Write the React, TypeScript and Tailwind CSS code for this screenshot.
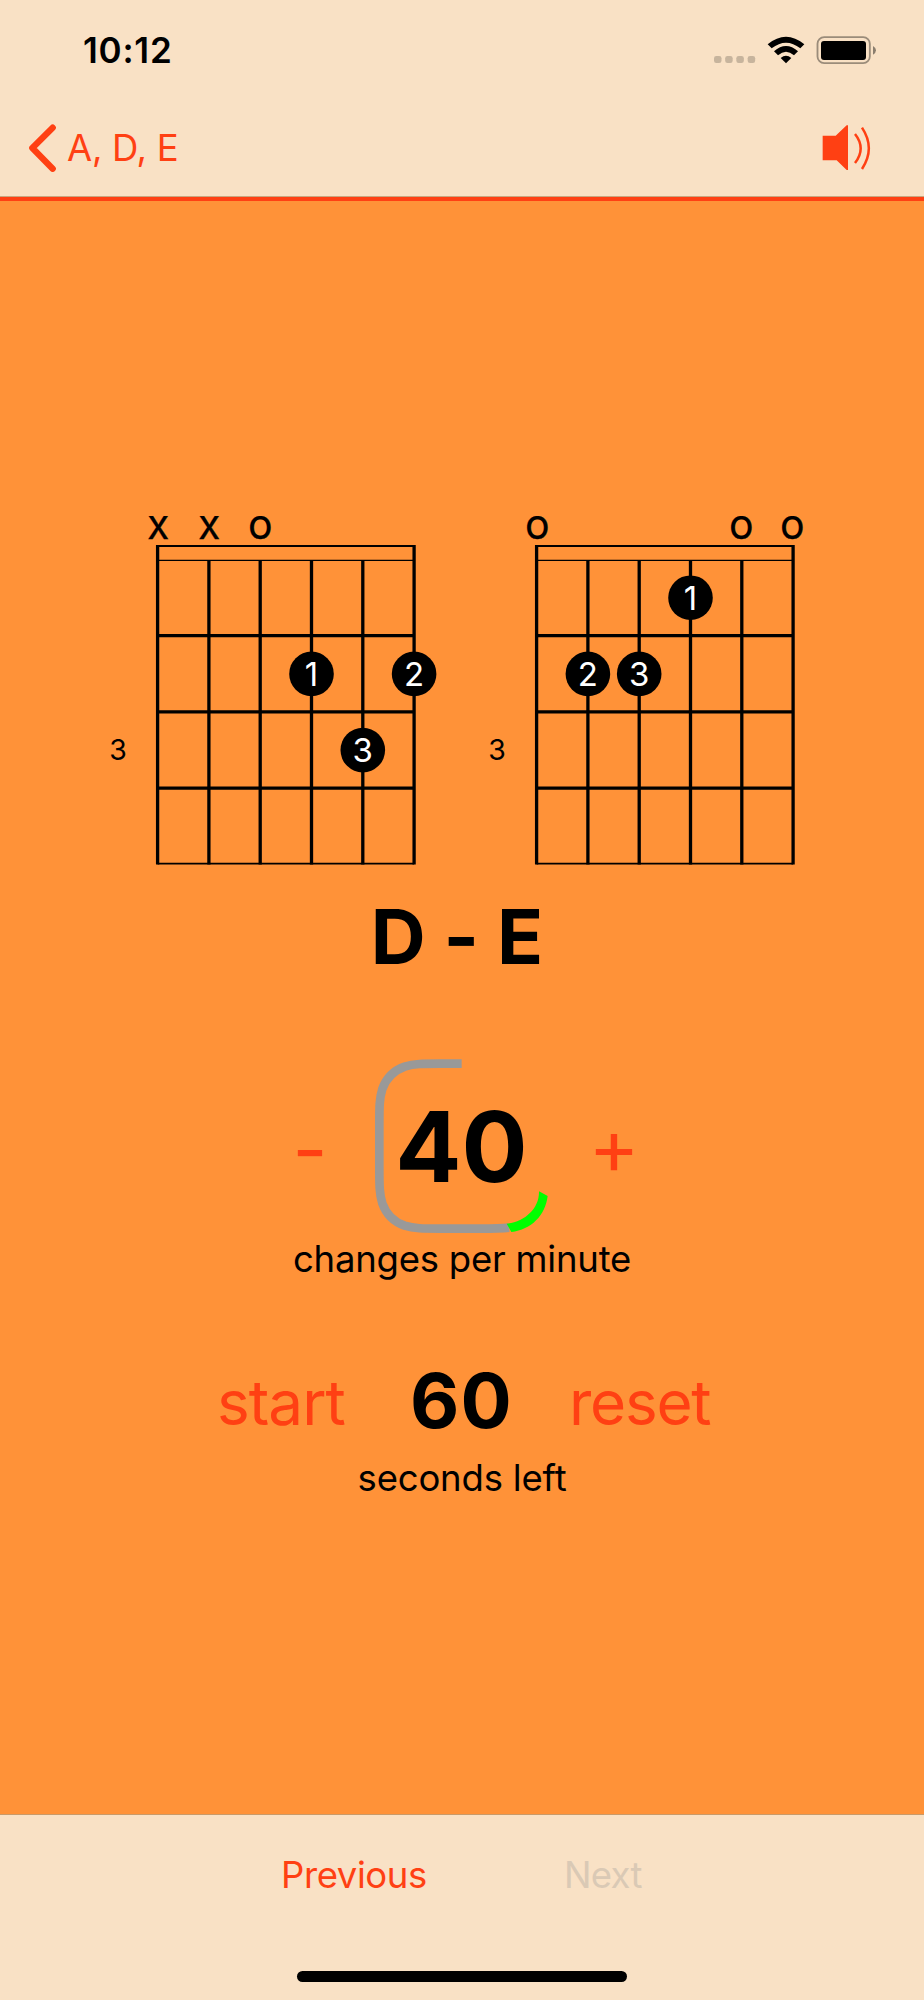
interface Finger {
  string: number;
  fret: number;
  label: string;
}

interface Chord {
  name: string;
  marks: string[];
  fingers: Finger[];
}

const CHORDS: Chord[] = [
  {
    name: "D",
    marks: ["x", "x", "o", "", "", ""],
    fingers: [
      { string: 3, fret: 1, label: "1" },
      { string: 5, fret: 1, label: "2" },
      { string: 4, fret: 2, label: "3" },
    ],
  },
  {
    name: "E",
    marks: ["o", "", "", "", "o", "o"],
    fingers: [
      { string: 3, fret: 0, label: "1" },
      { string: 1, fret: 1, label: "2" },
      { string: 2, fret: 1, label: "3" },
    ],
  },
];

const STRING_GAP = 51.3;
const FRET_GAP = 76.2;
const LEFT = 57.6;
const RIGHT = LEFT + STRING_GAP * 5;

function ChordDiagram({ chord }: { chord: Chord }) {
  return (
    <svg className="h-[390px] w-[340px]" viewBox="0 -20 340 390" fill="none" stroke="black">
      {/* Nut and frets */}
      <path d={`M${LEFT} 46H${RIGHT}`} strokeWidth="1.8" />
      <path d={`M${LEFT} 60.4H${RIGHT}`} strokeWidth="1.3" />
      {[1, 2, 3].map((n) => (
        <path key={n} d={`M${LEFT} ${59.5 + n * FRET_GAP}H${RIGHT}`} strokeWidth="3.3" />
      ))}
      <path d={`M${LEFT} 363.7H${RIGHT}`} strokeWidth="1.7" />

      {/* Strings */}
      {chord.marks.map((_, i) => {
        const x = LEFT + i * STRING_GAP;
        const top = i === 0 || i === 5 ? 45.1 : 60;
        return <path key={i} d={`M${x} ${top}V364.5`} strokeWidth="3.3" />;
      })}

      <g stroke="none" textAnchor="middle">
        {chord.marks.map((mark, i) => (
          <text
            key={i}
            x={LEFT + 0.7 + i * 51}
            y="38.6"
            fontSize="41"
            fill="black"
            stroke="black"
            strokeWidth="0.25"
          >
            {mark}
          </text>
        ))}
        <text x="18" y="260.3" fontSize="28.5" fill="black">
          3
        </text>
        {chord.fingers.map((f) => {
          const x = LEFT + f.string * STRING_GAP;
          const y = 97.7 + f.fret * FRET_GAP;
          return (
            <g key={f.label}>
              <circle cx={x} cy={y} r="22.3" fill="black" />
              <text x={x} y={y + 12} fontSize="33" fill="white">
                {f.label}
              </text>
            </g>
          );
        })}
      </g>
    </svg>
  );
}

function StatusIcons() {
  return (
    <svg className="h-[30px] w-[164px]" viewBox="102 105 492 90">
      {[102, 135.5, 169, 203].map((x) => (
        <rect key={x} x={x} y="168" width="22.5" height="21" rx="7" fill="#c7b49d" />
      ))}
      {/* Wifi */}
      <path d="M263 133Q318 88 373 133L361 145Q318 111 275 145Z" />
      <path d="M282 154Q318 122 354 154L342 166Q318 145 294 166Z" />
      <path d="M302 174Q318 160 334 174L318 190Z" />
      {/* Battery */}
      <rect x="412.5" y="111.5" width="157" height="78" rx="20" fill="none" stroke="#9b8c7a" strokeWidth="5.5" />
      <rect x="423" y="123" width="135" height="57" rx="9" />
      <path d="M579 138Q588 143 588 151Q588 159 579 164Z" fill="#8b7e6e" />
    </svg>
  );
}

function SpeakerIcon() {
  return (
    <svg className="h-[46px] w-[49px]" viewBox="426 376 147 138">
      <path d="M428 408H467L500 377H504V511H500L470 482H428Z" fill="#ff4013" />
      <path d="M525 403Q559 446 525 490M546 384Q587 446 546 508" fill="none" stroke="#ff4013" strokeWidth="7.5" />
    </svg>
  );
}

function TempoRing() {
  return (
    <svg className="absolute inset-0 h-full w-full" viewBox="283 536 528 522" fill="none">
      <path
        d="M546 550H482C430 550 403 550 375 559C344 570 319 595 308 626C299 654 299 681 299 733V862C299 914 299 941 308 969C319 1000 344 1025 375 1036C403 1045 430 1045 482 1045H600C640 1045 662 1045 688 1042"
        stroke="#999"
        strokeWidth="26"
      />
      <path d="M681 1030C735 1024 779 985 778 933L804 947C797 1005 755 1048 695 1055Z" fill="#00ff00" />
    </svg>
  );
}

export default function App() {
  return (
    <div className="flex h-[2000px] w-[924px] flex-col overflow-hidden bg-[#ff9238] font-['Inter',sans-serif] whitespace-nowrap text-black">
      <header className="h-[201px] border-b-4 border-[#ff4013] bg-[#f9e1c5]">
        <div className="flex h-[100px] items-center justify-between pr-[46px] pl-[83px]">
          <span className="pt-px text-[35px] leading-none font-semibold tracking-[0.022em]">10:12</span>
          <StatusIcons />
        </div>
        <div className="flex h-[97px] items-center justify-between border-b border-[#c9a67f] pr-[53px] pl-[28px]">
          <button className="flex items-center gap-[11px] text-[#ff4013]">
            <svg className="h-[48px] w-[28px]" viewBox="84 371 84 144" fill="none">
              <path
                d="M158 382L97 443L158 505"
                stroke="currentColor"
                strokeWidth="19"
                strokeLinecap="round"
                strokeLinejoin="round"
              />
            </svg>
            <span className="text-[36.5px] leading-none tracking-[-0.008em]">A, D, E</span>
          </button>
          <SpeakerIcon />
        </div>
      </header>

      <main className="flex grow flex-col items-center pt-[279px]">
        <div className="flex w-full gap-[39px] pl-[100px]">
          {CHORDS.map((chord) => (
            <ChordDiagram key={chord.name} chord={chord} />
          ))}
        </div>

        <h1 className="mt-[26px] mr-[10px] text-[76px] leading-[80px] font-bold [font-feature-settings:'calt'_0]">
          D - E
        </h1>

        {/* Changes per minute */}
        <div className="mt-[83px] flex h-[174px] w-full items-center justify-center">
          <button className="w-[60px] pt-[6px] text-[76px] leading-none text-[#ff4013]">-</button>
          <div className="relative mx-[34px] flex h-[174px] w-[176px] items-center justify-center">
            <TempoRing />
            <span className="pt-[2px] pr-px text-[98px] leading-none font-bold">40</span>
          </div>
          <button className="w-[60px] text-[77px] leading-none text-[#ff4013]">+</button>
        </div>
        <p className="mt-[4px] text-[36.5px] leading-[44px] tracking-[-0.006em]">changes per minute</p>

        {/* Countdown */}
        <div className="mt-[79px] flex h-[80px] w-full items-center pl-[217px]">
          <button className="w-[126px] pt-[5px] text-left text-[62px] leading-none tracking-[-0.016em] text-[#ff4013]">
            start
          </button>
          <span className="ml-[67px] w-[98px] text-[76px] leading-none font-bold tracking-[0.015em]">60</span>
          <button className="ml-[61px] pt-[5px] text-[62px] leading-none tracking-[-0.02em] text-[#ff4013]">reset</button>
        </div>
        <p className="mt-[16px] text-[36.5px] leading-[44px] tracking-[-0.005em]">seconds left</p>
      </main>

      <footer className="flex h-[186px] flex-col items-center border-t border-[#c99a69] bg-[#f9e1c5]">
        <div className="flex h-[120px] w-full items-center pl-[281px] text-[36.5px] leading-none">
          <button className="w-[283px] text-left tracking-[-0.011em] text-[#ff4013]">Previous</button>
          <button className="tracking-[-0.02em] text-[#dac9b5]" disabled>
            Next
          </button>
        </div>
        <div className="mt-[36px] h-[11px] w-[330px] rounded-full bg-black" />
      </footer>
    </div>
  );
}
